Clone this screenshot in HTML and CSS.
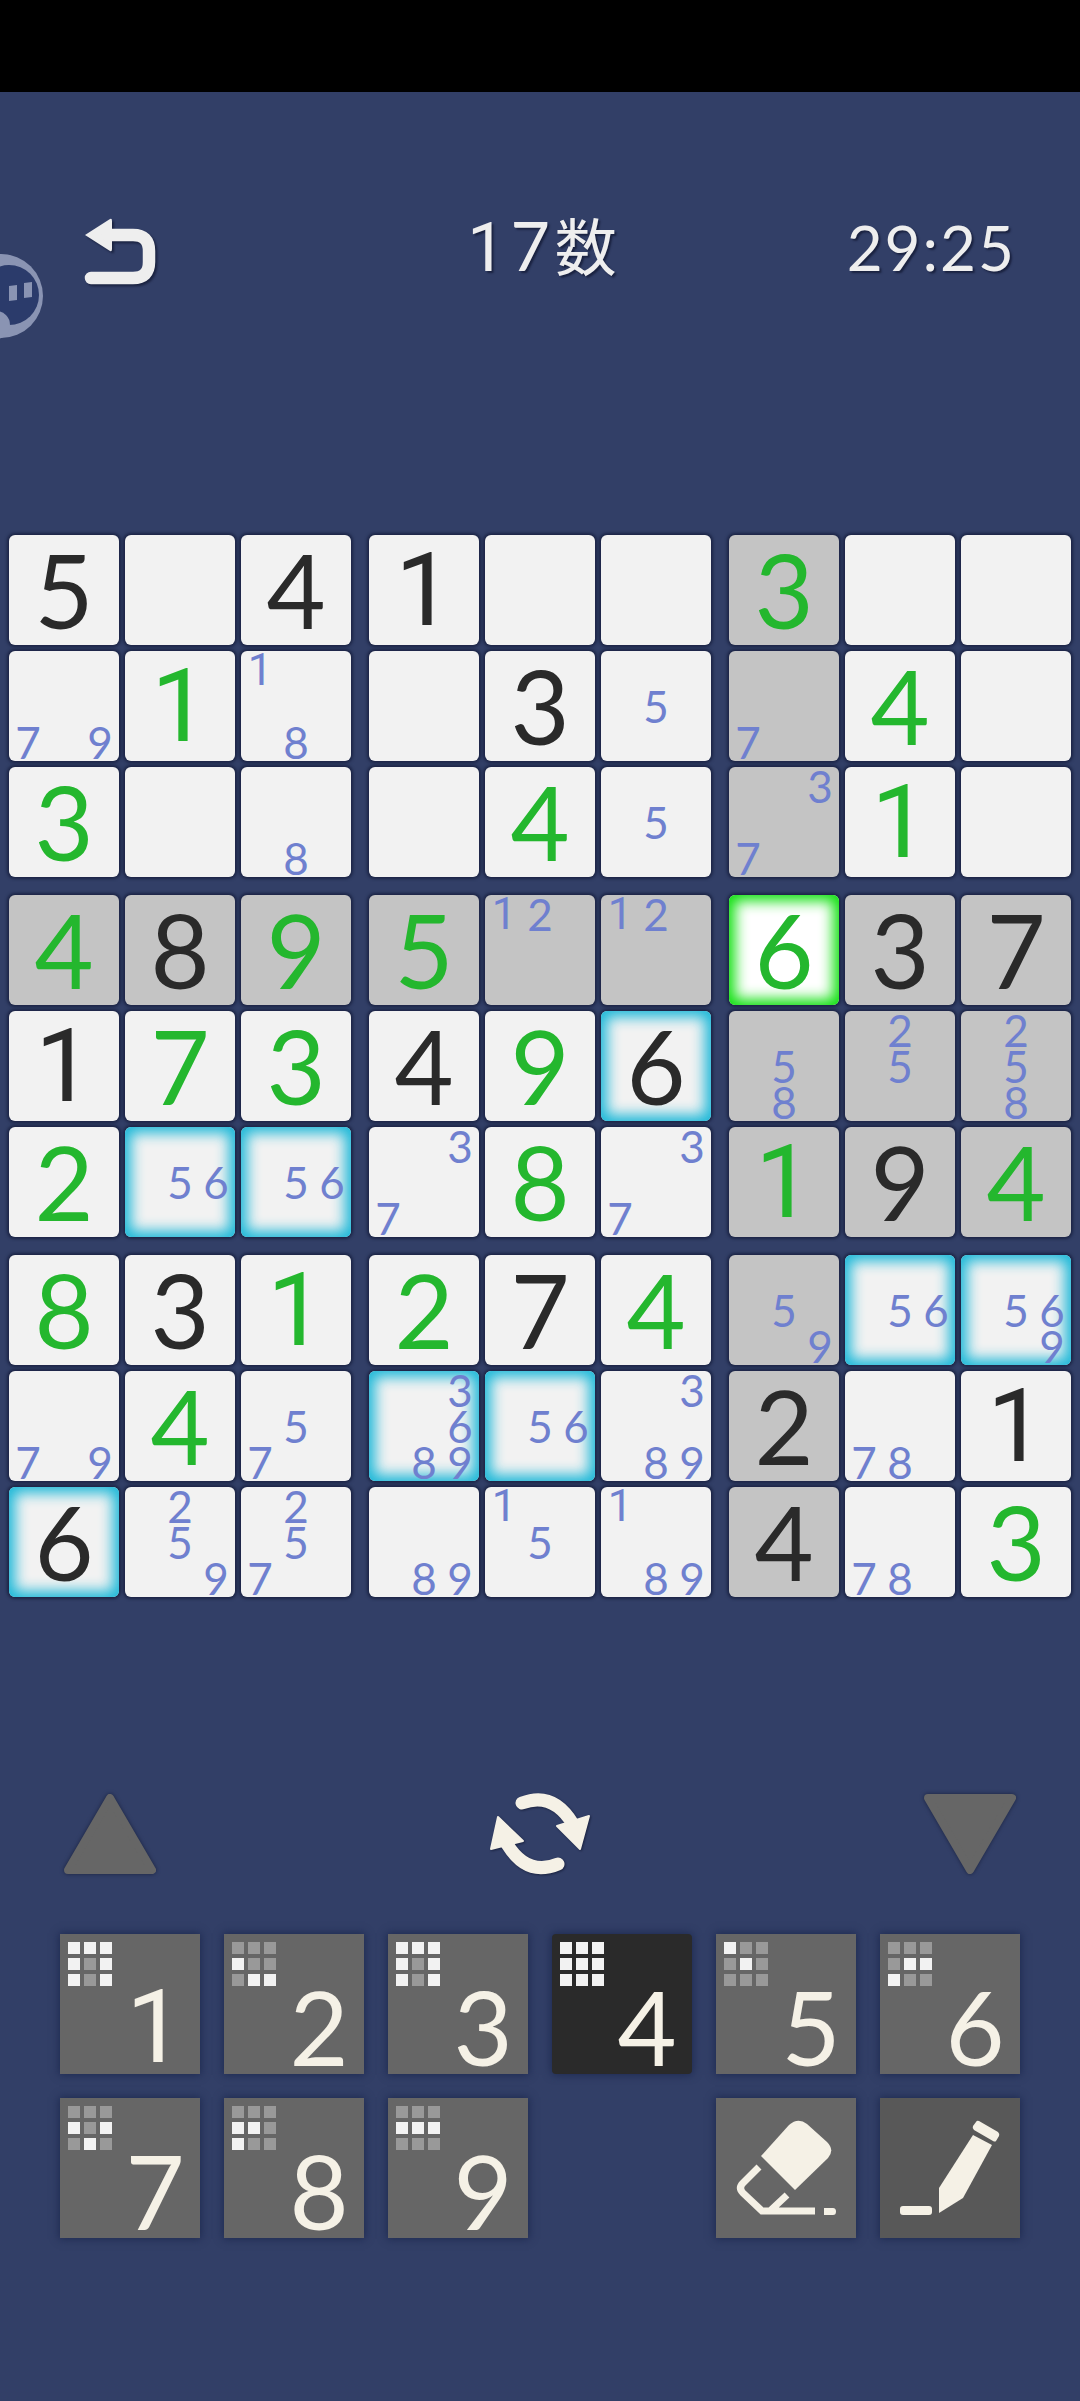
FILE: index.html
```html
<!DOCTYPE html>
<html lang="ja">
<head>
  <meta charset="UTF-8">
  <meta name="viewport" content="width=device-width, initial-scale=1">
  <title>17数</title>
  <link rel="stylesheet" href="styles.css">
</head>
<body>
  <div class="statusbar"></div>

  <!-- floating helper, half off the screen -->
  <svg class="floater" width="50" height="100" viewBox="0 0 50 100">
    <circle cx="1" cy="46" r="42" fill="#8a94b3"/>
    <circle cx="9" cy="45" r="30" fill="#2b3b6b"/>
    <circle cx="-4" cy="75" r="14" fill="#8a94b3"/>
    <path d="M9 36l8-1v15l-8 1zM24 33l8-1v15l-8 1z" fill="#8a94b3"/>
  </svg>

  <header class="topbar">
    <svg class="back" width="75" height="75" viewBox="0 0 75 75">
      <path d="M3 20L28 4Q30 3 30 6V34Q30 37 28 36Z" fill="#eeeeee"/>
      <path d="M26 20H51Q67 20 67 36V47Q67 63 51 63H9" fill="none" stroke="#eeeeee" stroke-width="12.5" stroke-linecap="round"/>
    </svg>
    <div class="title"><span class="one">1</span>7<span class="title-kanji">数</span></div>
    <div class="timer">29:25</div>
  </header>

  <main class="board">
    <div class="box">
      <div class="cell"><b class="val">5</b></div>
      <div class="cell"></div>
      <div class="cell"><b class="val">4</b></div>
      <div class="cell"><span class="n7">7</span><span class="n9">9</span></div>
      <div class="cell"><b class="val green one">1</b></div>
      <div class="cell"><span class="n1">1</span><span class="n8">8</span></div>
      <div class="cell"><b class="val green">3</b></div>
      <div class="cell"></div>
      <div class="cell"><span class="n8">8</span></div>
    </div>
    <div class="box">
      <div class="cell"><b class="val one">1</b></div>
      <div class="cell"></div>
      <div class="cell"></div>
      <div class="cell"></div>
      <div class="cell"><b class="val">3</b></div>
      <div class="cell"><span class="n5">5</span></div>
      <div class="cell"></div>
      <div class="cell"><b class="val green">4</b></div>
      <div class="cell"><span class="n5">5</span></div>
    </div>
    <div class="box">
      <div class="cell gray"><b class="val green">3</b></div>
      <div class="cell"></div>
      <div class="cell"></div>
      <div class="cell gray"><span class="n7">7</span></div>
      <div class="cell"><b class="val green">4</b></div>
      <div class="cell"></div>
      <div class="cell gray"><span class="n3">3</span><span class="n7">7</span></div>
      <div class="cell"><b class="val green one">1</b></div>
      <div class="cell"></div>
    </div>

    <div class="box">
      <div class="cell gray"><b class="val green">4</b></div>
      <div class="cell gray"><b class="val">8</b></div>
      <div class="cell gray"><b class="val green">9</b></div>
      <div class="cell"><b class="val one">1</b></div>
      <div class="cell"><b class="val green">7</b></div>
      <div class="cell"><b class="val green">3</b></div>
      <div class="cell"><b class="val green">2</b></div>
      <div class="cell same"><span class="n5">5</span><span class="n6">6</span></div>
      <div class="cell same"><span class="n5">5</span><span class="n6">6</span></div>
    </div>
    <div class="box">
      <div class="cell gray"><b class="val green">5</b></div>
      <div class="cell gray"><span class="n1">1</span><span class="n2">2</span></div>
      <div class="cell gray"><span class="n1">1</span><span class="n2">2</span></div>
      <div class="cell"><b class="val">4</b></div>
      <div class="cell"><b class="val green">9</b></div>
      <div class="cell same"><b class="val">6</b></div>
      <div class="cell"><span class="n3">3</span><span class="n7">7</span></div>
      <div class="cell"><b class="val green">8</b></div>
      <div class="cell"><span class="n3">3</span><span class="n7">7</span></div>
    </div>
    <div class="box">
      <div class="cell selected"><b class="val green">6</b></div>
      <div class="cell gray"><b class="val">3</b></div>
      <div class="cell gray"><b class="val">7</b></div>
      <div class="cell gray"><span class="n5">5</span><span class="n8">8</span></div>
      <div class="cell gray"><span class="n2">2</span><span class="n5">5</span></div>
      <div class="cell gray"><span class="n2">2</span><span class="n5">5</span><span class="n8">8</span></div>
      <div class="cell gray"><b class="val green one">1</b></div>
      <div class="cell gray"><b class="val">9</b></div>
      <div class="cell gray"><b class="val green">4</b></div>
    </div>

    <div class="box">
      <div class="cell"><b class="val green">8</b></div>
      <div class="cell"><b class="val">3</b></div>
      <div class="cell"><b class="val green one">1</b></div>
      <div class="cell"><span class="n7">7</span><span class="n9">9</span></div>
      <div class="cell"><b class="val green">4</b></div>
      <div class="cell"><span class="n5">5</span><span class="n7">7</span></div>
      <div class="cell same"><b class="val">6</b></div>
      <div class="cell"><span class="n2">2</span><span class="n5">5</span><span class="n9">9</span></div>
      <div class="cell"><span class="n2">2</span><span class="n5">5</span><span class="n7">7</span></div>
    </div>
    <div class="box">
      <div class="cell"><b class="val green">2</b></div>
      <div class="cell"><b class="val">7</b></div>
      <div class="cell"><b class="val green">4</b></div>
      <div class="cell same"><span class="n3">3</span><span class="n6">6</span><span class="n8">8</span><span class="n9">9</span></div>
      <div class="cell same"><span class="n5">5</span><span class="n6">6</span></div>
      <div class="cell"><span class="n3">3</span><span class="n8">8</span><span class="n9">9</span></div>
      <div class="cell"><span class="n8">8</span><span class="n9">9</span></div>
      <div class="cell"><span class="n1">1</span><span class="n5">5</span></div>
      <div class="cell"><span class="n1">1</span><span class="n8">8</span><span class="n9">9</span></div>
    </div>
    <div class="box">
      <div class="cell gray"><span class="n5">5</span><span class="n9">9</span></div>
      <div class="cell same"><span class="n5">5</span><span class="n6">6</span></div>
      <div class="cell same"><span class="n5">5</span><span class="n6">6</span><span class="n9">9</span></div>
      <div class="cell gray"><b class="val">2</b></div>
      <div class="cell"><span class="n7">7</span><span class="n8">8</span></div>
      <div class="cell"><b class="val one">1</b></div>
      <div class="cell gray"><b class="val">4</b></div>
      <div class="cell"><span class="n7">7</span><span class="n8">8</span></div>
      <div class="cell"><b class="val green">3</b></div>
    </div>
  </main>

  <section class="controls">
    <svg class="arrow" width="94" height="82" viewBox="0 0 94 82">
      <path d="M47 5L89 77H5Z"/>
    </svg>
    <svg class="swap" width="140" height="110" viewBox="0 0 140 110">
      <path d="M52 24Q83 12 103 45" fill="none" stroke="#f5f1e6" stroke-width="13" stroke-linecap="round"/>
      <path d="M119 37L110 70L87 47Z" fill="#f5f1e6" stroke="#f5f1e6" stroke-width="2" stroke-linejoin="round"/>
      <path d="M88 85Q57 98 37 65" fill="none" stroke="#f5f1e6" stroke-width="13" stroke-linecap="round"/>
      <path d="M28 38L21 70L53 62Z" fill="#f5f1e6" stroke="#f5f1e6" stroke-width="2" stroke-linejoin="round"/>
    </svg>
    <svg class="arrow" width="94" height="82" viewBox="0 0 94 82">
      <path d="M47 77L89 5H5Z"/>
    </svg>
  </section>

  <section class="keypad">
    <div class="key">
      <div class="mini"><i></i><i></i><i></i><i></i><i class="off"></i><i></i><i></i><i class="off"></i><i></i></div>
      <div class="key-num one">1</div>
    </div>
    <div class="key">
      <div class="mini"><i class="off"></i><i class="off"></i><i class="off"></i><i></i><i class="off"></i><i class="off"></i><i class="off"></i><i></i><i></i></div>
      <div class="key-num">2</div>
    </div>
    <div class="key">
      <div class="mini"><i></i><i></i><i></i><i></i><i class="off"></i><i></i><i></i><i class="off"></i><i></i></div>
      <div class="key-num">3</div>
    </div>
    <div class="key active">
      <div class="mini"><i></i><i></i><i></i><i></i><i></i><i></i><i></i><i></i><i></i></div>
      <div class="key-num">4</div>
    </div>
    <div class="key">
      <div class="mini"><i></i><i class="off"></i><i class="off"></i><i class="off"></i><i></i><i class="off"></i><i class="off"></i><i class="off"></i><i class="off"></i></div>
      <div class="key-num">5</div>
    </div>
    <div class="key">
      <div class="mini"><i class="off"></i><i class="off"></i><i class="off"></i><i class="off"></i><i></i><i></i><i></i><i class="off"></i><i class="off"></i></div>
      <div class="key-num">6</div>
    </div>
    <div class="key">
      <div class="mini"><i class="off"></i><i class="off"></i><i class="off"></i><i></i><i class="off"></i><i></i><i class="off"></i><i></i><i class="off"></i></div>
      <div class="key-num">7</div>
    </div>
    <div class="key">
      <div class="mini"><i class="off"></i><i class="off"></i><i class="off"></i><i></i><i></i><i class="off"></i><i></i><i class="off"></i><i class="off"></i></div>
      <div class="key-num">8</div>
    </div>
    <div class="key">
      <div class="mini"><i class="off"></i><i class="off"></i><i class="off"></i><i></i><i></i><i></i><i class="off"></i><i class="off"></i><i class="off"></i></div>
      <div class="key-num">9</div>
    </div>
    <div class="key tool eraser">
      <svg width="140" height="140" viewBox="0 0 140 140">
        <path d="M45 58L73 27Q82 19 91 26L111 44Q119 52 112 60L79 92Z" fill="#f5f1e6"/>
        <path d="M43 69L27 85Q22 90 27 95L46 113H99M71 97L55 112" fill="none" stroke="#f5f1e6" stroke-width="7"/>
        <path d="M108 110H117Q120 110 120 113.500Q120 117 117 117H108Z" fill="#f5f1e6"/>
      </svg>
    </div>
    <div class="key tool pencil">
      <svg width="140" height="140" viewBox="0 0 140 140">
        <path d="M93 37L112 47L83 100L59 115V90Z" fill="#f5f1e6"/>
        <path d="M99 23L118 34Q120 36 119 38L116 43Q115 44 113 43L94 32Q92 30 93 28L96 24Q97 22 99 23Z" fill="#f5f1e6"/>
        <rect x="20" y="108" width="32" height="9" rx="3" fill="#f5f1e6"/>
      </svg>
    </div>
  </section>
</body>
</html>
```

FILE: styles.css
```css
* { box-sizing: border-box; }
html, body { margin: 0; }
body { position: relative; width: 1080px; height: 2401px; overflow: hidden; background-color: #323f67;
  font-family: Lato, "Noto Sans CJK JP", sans-serif; }

.statusbar { height: 92px; background-color: #000; }
.floater { position: absolute; left: 0; top: 250px; }

.topbar { display: grid; grid-template-columns: 1fr auto 1fr; align-items: center; height: 75px;
  margin-top: 123px; padding: 0 64px; color: #eee; text-shadow: 2px 2px 2px #1a2240; }
.back { margin-left: 18px; filter: drop-shadow(2px 2px 1px #1a2240); }
.title { margin-left: 4px; padding-bottom: 12px; font-size: 68px; line-height: 60px; letter-spacing: 5px; }
.title-kanji { font-size: 62px; letter-spacing: 0; }
.timer { padding-bottom: 12px; font-size: 62px; line-height: 60px; letter-spacing: 2px; text-align: right; }

.board { display: grid; grid-template-columns: repeat(3, 342px); gap: 18px; margin-top: 245px; padding-left: 9px; }
.box { display: grid; grid-template-columns: repeat(3, 110px); grid-auto-rows: 110px; gap: 6px; }

.cell { display: grid; grid-template-columns: repeat(3, 36px); grid-template-rows: repeat(3, 36px); padding: 1px;
  border-radius: 6px; background-color: #f2f2f2; box-shadow: 0 0 3px 2px #1c2546; }
.cell.gray { background-color: #c4c4c4; }
.cell.same { box-shadow: 0 0 3px 2px #1c2546, inset 0 0 14px 6px #1cb8d8; }
.cell.selected { background-color: #fff; box-shadow: 0 0 3px 2px #1c2546, inset 0 0 14px 6px #10e010; }

.val { grid-area: 1 / 1 / 4 / 4; align-self: center; text-align: center; font-size: 102px; font-weight: 400;
  line-height: 108px; color: #2a2a2a; }
.val.green { color: #24b72e; }

.cell span { font-size: 44px; line-height: 36px; text-align: center; color: #6f80cf; }
.n1 { grid-area: 1 / 1; }
.n2 { grid-area: 1 / 2; }
.n3 { grid-area: 1 / 3; }
.n5 { grid-area: 2 / 2; }
.n6 { grid-area: 2 / 3; }
.n7 { grid-area: 3 / 1; }
.n8 { grid-area: 3 / 2; }
.n9 { grid-area: 3 / 3; }

/* Lato's 1 has a foot, the game's doesn't */
.one, .cell span.n1 { font-family: Roboto, sans-serif; }

.controls { display: flex; justify-content: space-between; align-items: center; margin-top: 196px; padding: 0 63px; height: 82px; }
.arrow path { fill: #666; stroke: #666; stroke-width: 8px; stroke-linejoin: round; }
.arrow { filter: drop-shadow(0 0 2px #1a2240); }
.swap { filter: drop-shadow(1px 1px 1px #1a2240); }

.keypad { display: grid; grid-template-columns: repeat(6, 140px); grid-auto-rows: 140px; gap: 24px; margin-top: 59px; padding-left: 60px; }
.key { display: grid; background-color: #666; box-shadow: 0 0 8px 1px #1e2a50; }
.key.active { background-color: #2a2a2a; border-radius: 4px; }
.key.eraser { grid-column: 5; }
.key.pencil { background-color: #585858; }

.mini { grid-area: 1 / 1; display: grid; grid-template-columns: repeat(3, 12px); grid-auto-rows: 12px; gap: 4px;
  align-self: start; justify-self: start; margin: 8px; }
.mini i { background-color: #f2f2f2; }
.mini i.off { background-color: #999; }

.key-num { grid-area: 1 / 1; align-self: end; margin: 0 0 -7px 50px; text-align: center; font-size: 102px; line-height: 108px; color: #f5f1e6; }
```
